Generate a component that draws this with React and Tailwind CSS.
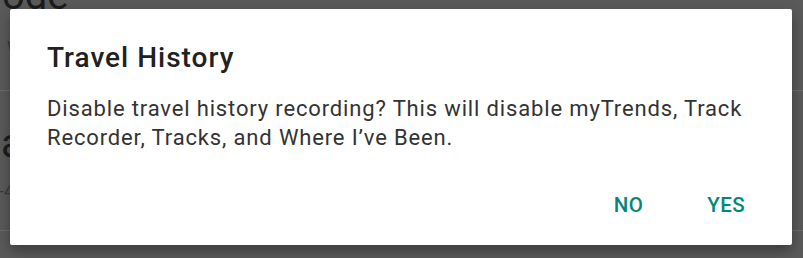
import React from "react";

const Backdrop = () => {
  return (
    <div className="flex flex-col text-[#1c1c1c]">
      <div className="-mt-[24px] -ml-[33px] h-[40px] whitespace-nowrap text-[40px] leading-[40px]">
        Mode
      </div>
      <div className="h-[74px] pl-[7px] pt-[20px] text-[18px] leading-[24px] text-[#3a3a3a]">
        Walking
      </div>
      <div className="border-t border-[#6c6c6c]" />
      <div className="mt-[33px] h-[40px] pl-[1px] text-[40px] leading-[40px]">
        auto
      </div>
      <div className="mt-[15px] h-[24px] -ml-[1px] text-[18px] leading-[24px] text-[#3a3a3a]">
        -42
      </div>
      <div className="mt-[27px] border-t border-[#6c6c6c]" />
    </div>
  );
};

const TravelHistoryDialog = () => {
  return (
    <div className="absolute left-[10px] top-[9px] flex h-[236px] w-[782px] flex-col rounded-[2px] bg-white pl-[37px] pr-[37px] pt-[33px] shadow-[0_6px_14px_rgba(0,0,0,0.35)]">
      <h2 className="text-[28px] font-medium leading-[32px] tracking-[1px] text-[#212121]">
        Travel History
      </h2>
      <p className="mt-[20px] text-[22px] leading-[29px] tracking-[0.85px] text-[#333333]">
        Disable travel history recording? This will disable myTrends, Track
        Recorder, Tracks, and Where I’ve Been.
      </p>
      <div className="mt-[41px] flex justify-end gap-[64px] pr-[10px]">
        <button className="text-[20.5px] font-medium uppercase leading-[24px] tracking-[0.4px] text-[#00897b]">
          No
        </button>
        <button className="text-[20.5px] font-medium uppercase leading-[24px] tracking-[0.4px] text-[#00897b]">
          Yes
        </button>
      </div>
    </div>
  );
};

export default function App() {
  return (
    <div className="relative h-[258px] w-[803px] overflow-hidden bg-[#5a5a5a] font-['Roboto',sans-serif]">
      <Backdrop />
      <TravelHistoryDialog />
    </div>
  );
}
